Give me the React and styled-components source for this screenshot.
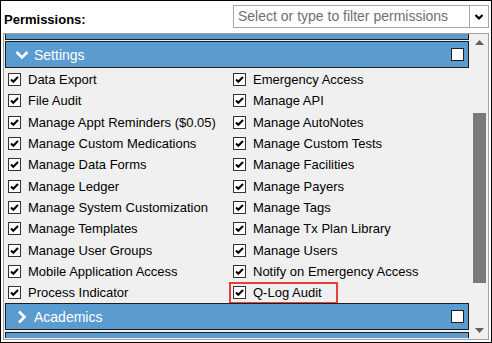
import React from 'react'
import styled, { createGlobalStyle } from 'styled-components'

const GlobalStyle = createGlobalStyle`
  html, body { margin: 0; padding: 0; background: #fff; }
  body { font-family: "Liberation Sans", Arial, sans-serif; }
`

const left = [
  'Data Export',
  'File Audit',
  'Manage Appt Reminders ($0.05)',
  'Manage Custom Medications',
  'Manage Data Forms',
  'Manage Ledger',
  'Manage System Customization',
  'Manage Templates',
  'Manage User Groups',
  'Mobile Application Access',
  'Process Indicator',
]

const right = [
  'Emergency Access',
  'Manage API',
  'Manage AutoNotes',
  'Manage Custom Tests',
  'Manage Facilities',
  'Manage Payers',
  'Manage Tags',
  'Manage Tx Plan Library',
  'Manage Users',
  'Notify on Emergency Access',
  'Q-Log Audit',
]

const Frame = styled.div`
  width: 492px;
  height: 343px;
  box-sizing: border-box;
  border: 1px solid #000;
  display: flex;
  flex-direction: column;
  background: #fff;
  overflow: hidden;
`

const Top = styled.div`
  height: 32px;
  display: flex;
  align-items: flex-start;
`

const Label = styled.div`
  font-weight: bold;
  font-size: 13px;
  line-height: 15px;
  color: #000;
  padding: 11px 0 0 3px;
`

const Select = styled.div`
  margin: 4px 2px 0 auto;
  width: 256px;
  height: 23px;
  box-sizing: border-box;
  border: 1px solid #a6a6a6;
  display: flex;
  align-items: stretch;
  background: #fff;
`

const Placeholder = styled.div`
  flex: 1;
  font-size: 14px;
  line-height: 21px;
  color: #6f6f6f;
  padding-left: 4px;
  white-space: nowrap;
  overflow: hidden;
`

const Caret = styled.div`
  width: 18px;
  border-left: 1px solid #a6a6a6;
  display: flex;
  align-items: center;
  justify-content: center;
`

const Panel = styled.div`
  margin: 0 2px 2px 2px;
  height: 307px;
  box-sizing: border-box;
  border: 1px solid #a0a0a0;
  background: #f0f0f0;
  display: flex;
`

const List = styled.div`
  flex: 1;
  padding: 0 2px 0 1px;
  overflow: hidden;
  display: flex;
  flex-direction: column;
`

const Bar = styled.div`
  height: 5px;
  flex-shrink: 0;
  background: #5a9bd0;
  border: 1px solid #1e1e1e;
  border-top: ${p => (p.$top ? 'none' : '1px solid #1e1e1e')};
  border-bottom: ${p => (p.$top ? '1px solid #1e1e1e' : 'none')};
  margin-top: ${p => (p.$top ? '0' : '2px')};
`

const Header = styled.div`
  height: 27px;
  flex-shrink: 0;
  box-sizing: border-box;
  margin-top: ${p => p.$gap || 0}px;
  background: #5a9bd0;
  border: 1px solid #1e1e1e;
  display: flex;
  align-items: center;
  padding: 0 4px 0 9px;
  color: #fff;
  font-size: 14px;
`

const HeaderTitle = styled.span`
  flex: 1;
  margin-left: 5px;
`

const HeaderBox = styled.span`
  width: 13px;
  height: 13px;
  box-sizing: border-box;
  border: 1px solid #1e1e1e;
  background: #fff;
`

const Grid = styled.div`
  display: grid;
  grid-template-columns: 225px 1fr;
  grid-auto-rows: 21.3px;
  padding: 1px 0 0 3px;
  flex-shrink: 0;
`

const Cell = styled.div`
  display: flex;
  align-items: center;
  font-size: 13px;
  color: #000;
  white-space: nowrap;
  ${p =>
    p.$mark &&
    `
    align-self: center;
    height: 18px;
    width: 105px;
    margin-left: -2px;
    padding-left: 2px;
    box-sizing: border-box;
    outline: 2px solid #e8413c;
  `}
`

const Box = styled.span`
  width: 13px;
  height: 13px;
  box-sizing: border-box;
  border: 1px solid #333;
  background: #fff;
  margin-right: 7px;
  display: flex;
  align-items: center;
  justify-content: center;
  flex-shrink: 0;
`

const Scroll = styled.div`
  width: 17px;
  display: flex;
  flex-direction: column;
`

const Arrow = styled.div`
  height: 17px;
  display: flex;
  align-items: center;
  justify-content: center;
`

const Track = styled.div`
  flex: 1;
  padding-top: 62px;
`

const Thumb = styled.div`
  width: 13px;
  margin-left: 2px;
  height: 170px;
  background: #7a7a7a;
`

const Check = () => (
  <Box>
    <svg width="11" height="11" viewBox="0 0 11 11">
      <path d="M2 5.5 L4.3 7.8 L9 3" stroke="#000" strokeWidth="2" fill="none" />
    </svg>
  </Box>
)

const Chevron = ({ open }) => (
  <svg width="14" height="14" viewBox="0 0 14 14">
    {open ? (
      <path d="M1.5 4 L7 9.5 L12.5 4" stroke="#fff" strokeWidth="2.6" fill="none" />
    ) : (
      <path d="M4 1.5 L9.5 7 L4 12.5" stroke="#fff" strokeWidth="2.6" fill="none" />
    )}
  </svg>
)

export default function App() {
  return (
    <Frame>
      <GlobalStyle />
      <Top>
        <Label>Permissions:</Label>
        <Select>
          <Placeholder>Select or type to filter permissions</Placeholder>
          <Caret>
            <svg width="10" height="8" viewBox="0 0 10 8">
              <path d="M1.5 2 L5 5.5 L8.5 2" stroke="#000" strokeWidth="2.2" fill="none" />
            </svg>
          </Caret>
        </Select>
      </Top>
      <Panel>
        <List>
          <Bar $top />
          <Header $gap={1}>
            <Chevron open />
            <HeaderTitle>Settings</HeaderTitle>
            <HeaderBox />
          </Header>
          <Grid>
            {left.map((l, i) => (
              <React.Fragment key={l}>
                <Cell>
                  <Check />
                  {l}
                </Cell>
                <Cell $mark={right[i] === 'Q-Log Audit'}>
                  <Check />
                  {right[i]}
                </Cell>
              </React.Fragment>
            ))}
          </Grid>
          <Header>
            <Chevron />
            <HeaderTitle>Academics</HeaderTitle>
            <HeaderBox />
          </Header>
          <Bar />
        </List>
        <Scroll>
          <Arrow>
            <svg width="9" height="5" viewBox="0 0 9 5">
              <path d="M0 5 L4.5 0 L9 5 Z" fill="#606060" />
            </svg>
          </Arrow>
          <Track>
            <Thumb />
          </Track>
          <Arrow>
            <svg width="9" height="5" viewBox="0 0 9 5">
              <path d="M0 0 L4.5 5 L9 0 Z" fill="#606060" />
            </svg>
          </Arrow>
        </Scroll>
      </Panel>
    </Frame>
  )
}
